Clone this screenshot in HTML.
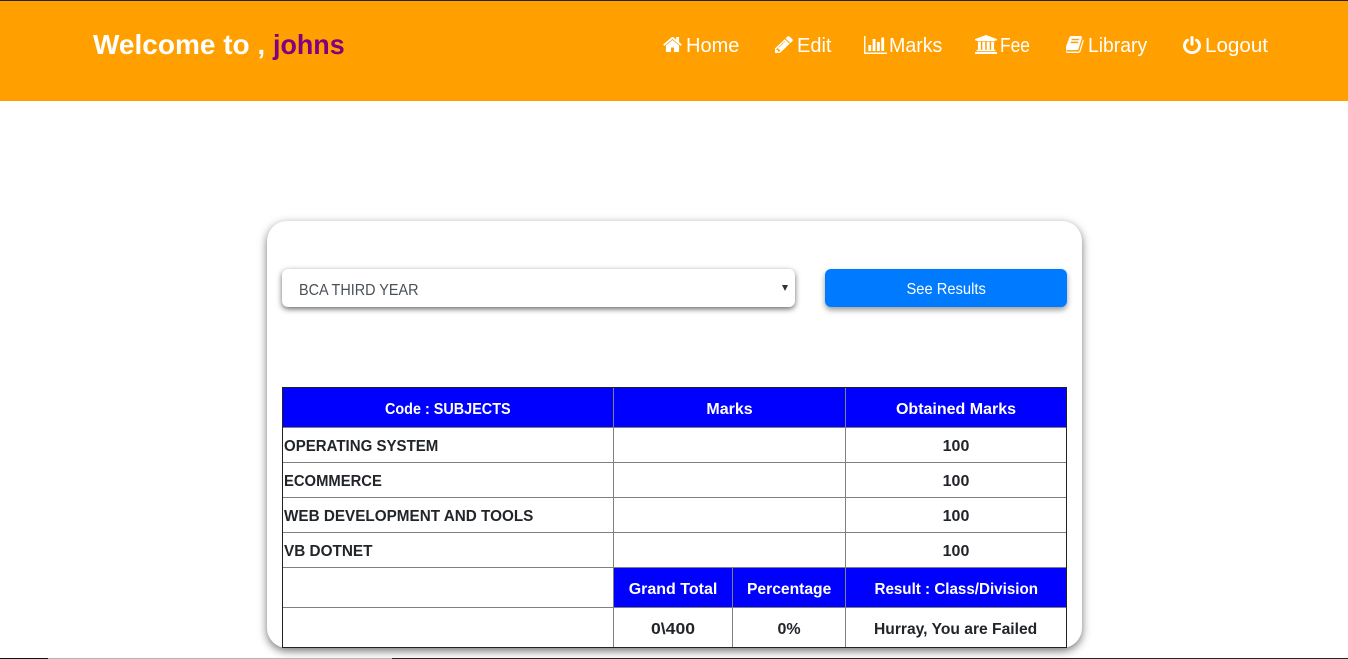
<!DOCTYPE html>
<html lang="en">
<head>
<meta charset="utf-8">
<title>Student Results</title>
<style>
html,body{margin:0;padding:0;width:1348px;height:659px;overflow:hidden;background:#fff;font-family:"Liberation Sans",sans-serif;color:#212529}
*{box-sizing:border-box}
.hdr{position:absolute;left:0;top:0;width:1348px;height:101px;background:#ff9f00;border-top:1px solid #2a2418}
.brand{position:absolute;left:93px;top:28px;font-size:28px;line-height:34px;font-weight:700;color:#fff;white-space:nowrap}
.brand span{color:#800080;display:inline-block;transform:scaleX(.96);transform-origin:0 50%}
.nav{position:absolute;top:35px;font-size:20px;line-height:23px;color:#fff;white-space:nowrap;transform-origin:0 50%}
.ic{position:absolute;fill:#fff}
.card{position:absolute;left:267px;top:221px;width:815px;height:427px;background:#fff;border-radius:20px;box-shadow:0 3px 9px rgba(0,0,0,.55)}
.sel{position:absolute;left:282px;top:269px;width:513px;height:38px;background:#fff;border-radius:6px;box-shadow:0 2px 6px rgba(0,0,0,.6);font-size:16px;line-height:44px;padding-left:17px;color:#495057}
.sel span{display:inline-block;line-height:20px;transform:scaleX(.9);transform-origin:0 50%}
.arr{position:absolute;left:782px;top:285px;width:0;height:0;border-left:3.500px solid transparent;border-right:3.500px solid transparent;border-top:6px solid #333}
.btn{position:absolute;left:825px;top:269px;width:242px;height:38px;background:#007bff;border:0;border-radius:6px;box-shadow:0 3px 6px rgba(0,0,0,.4);color:#fff;font:16px/38px "Liberation Sans",sans-serif;text-align:center;padding:2px 0 0}
.btn span{display:inline-block;transform:scaleX(.92)}
table{position:absolute;left:282px;top:387px;width:784px;height:260px;border-collapse:collapse;table-layout:fixed;font-size:16px;font-weight:700;color:#212529}
td,th{border:1px solid #808080;padding:4px 1px 0;text-align:center;vertical-align:middle;overflow:hidden;white-space:nowrap}
th{background:#0000ff;color:#fff;font-weight:700}
td.l{text-align:left}
td span,th span{display:inline-block}
td.l span{transform-origin:0 50%}
.frame{position:absolute;left:282px;top:387px;width:785px;height:261px;border:1px solid #222;pointer-events:none}
.foot{position:absolute;left:0;top:658px;height:1px}
</style>
</head>
<body>
<div class="hdr"></div>
<div class="brand">Welcome to , <span>johns</span></div>

<svg class="ic" style="left:663px;top:37px" width="19" height="15" viewBox="64 256 1664 1280" preserveAspectRatio="none"><path d="M1472 992v480q0 26-19 45t-45 19h-384v-384h-256v384h-384q-26 0-45-19t-19-45v-480q0-1 .5-3t.5-3l575-474 575 474q1 2 1 6zm223-69l-62 74q-8 9-21 11h-3q-13 0-21-7l-692-577-692 577q-12 8-24 7-13-2-21-11l-62-74q-8-10-7-23.500t11-21.500l719-599q32-26 76-26t76 26l244 204v-195q0-14 9-23t23-9h192q14 0 23 9t9 23v408l219 182q10 8 11 21.500t-7 23.500z"/></svg>
<div class="nav" style="left:686px">Home</div>

<svg class="ic" style="left:775px;top:36px" width="18" height="17" viewBox="128 128 1536 1536" preserveAspectRatio="none"><path d="M491 1536l91-91-235-235-91 91v107h128v128h107zm523-928q0-22-22-22-10 0-17 7l-542 542q-7 7-7 17 0 22 22 22 10 0 17-7l542-542q7-7 7-17zm-54-192l416 416-832 832h-416v-416zm683 96q0 53-37 90l-166 166-416-416 166-165q36-38 90-38 53 0 91 38l235 234q37 39 37 91z"/></svg>
<div class="nav" style="left:797px">Edit</div>

<svg class="ic" style="left:864px;top:36px" width="23" height="18" viewBox="0 128 2048 1536" preserveAspectRatio="none"><path d="M640 896v512h-256v-512h256zm384-512v1024h-256v-1024h256zm1024 1152v128h-2048v-1536h128v1408h1920zm-640-896v768h-256v-768h256zm384-384v1152h-256v-1152h256z"/></svg>
<div class="nav" style="left:889px;transform:scaleX(.98)">Marks</div>

<svg class="ic" style="left:975px;top:35px" width="22" height="19" viewBox="0 0 1920 1792" preserveAspectRatio="none"><path d="M960 0l960 384v128h-128q0 26-20.500 45t-48.500 19h-1526q-28 0-48.500-19t-20.500-45h-128v-128zm-704 640h256v768h128v-768h256v768h128v-768h256v768h128v-768h256v768h59q28 0 48.500 19t20.500 45v64h-1664v-64q0-26 20.500-45t48.500-19h59v-768zm1595 960q28 0 48.500 19t20.500 45v128h-1920v-128q0-26 20.500-45t48.500-19h1782z"/></svg>
<div class="nav" style="left:1000px;transform:scaleX(.87)">Fee</div>

<svg class="ic" style="left:1066px;top:36px" width="18" height="17" viewBox="90 128 1600 1536" preserveAspectRatio="none"><path d="M1639 478q40 57 18 129l-275 906q-19 64-76.500 107.500t-122.500 43.500h-923q-77 0-148.500-53.500t-99.500-131.500q-24-67-2-127 0-4 3-27t4-37q1-8-3-21.500t-3-19.500q2-11 8-21t16.500-23.500 16.500-23.500q23-38 45-91.500t30-91.500q3-10 .5-30t-.5-28q3-11 17-28t17-23q21-36 42-92t25-90q1-9-2.500-32t.5-28q4-13 22-30.500t22-22.500q19-26 42.500-84.500t27.500-96.500q1-8-3-25.500t-2-26.500q2-8 9-18t18-23 17-21q8-12 16.500-30.500t15-35 16-36 19.500-32 26.500-23.500 36-11.500 47.500 5.500l-1 3q38-9 51-9h761q74 0 114 56t18 130l-274 906q-36 119-71.500 153.500t-128.500 34.500h-869q-27 0-38 15-11 16-1 43 24 70 144 70h923q29 0 56-15.500t35-41.500l300-987q7-22 5-57 38 15 59 43zm-1064 2q-4 13 2 22.500t20 9.500h608q13 0 25.500-9.500t16.500-22.500l21-64q4-13-2-22.500t-20-9.500h-608q-13 0-25.500 9.500t-16.500 22.500zm-83 256q-4 13 2 22.500t20 9.500h608q13 0 25.500-9.500t16.500-22.500l21-64q4-13-2-22.500t-20-9.500h-608q-13 0-25.500 9.500t-16.500 22.500z"/></svg>
<div class="nav" style="left:1088px;transform:scaleX(.967)">Library</div>

<svg class="ic" style="left:1183px;top:36px" width="18" height="18" viewBox="0 0 1536 1664" preserveAspectRatio="none"><path d="M1536 896q0 156-61 298t-164 245-245 164-298 61-298-61-245-164-164-245-61-298q0-182 80.500-343t226.500-270q43-32 95.500-25t83.500 50q32 42 24.500 94.500t-49.500 84.500q-98 74-151.500 181t-53.500 228q0 104 40.500 198.500t109.500 163.500 163.500 109.500 198.500 40.500 198.500-40.500 163.500-109.500 109.500-163.500 40.500-198.500q0-121-53.500-228t-151.500-181q-42-32-49.500-84.500t24.500-94.500q31-43 84-50t95 25q146 109 226.500 270t80.500 343zm-640-768v640q0 52-38 90t-90 38-90-38-38-90v-640q0-52 38-90t90-38 90 38 38 90z"/></svg>
<div class="nav" style="left:1205px;transform:scaleX(1.03)">Logout</div>

<div class="card"></div>
<div class="sel"><span>BCA THIRD YEAR</span></div>
<div class="arr"></div>
<button class="btn"><span>See Results</span></button>

<table>
<colgroup><col style="width:331px"><col style="width:119px"><col style="width:113px"><col style="width:221px"></colgroup>
<tr style="height:40px"><th><span style="transform:scaleX(.9)">Code : SUBJECTS</span></th><th colspan="2">Marks</th><th>Obtained Marks</th></tr>
<tr style="height:35px"><td class="l"><span style="transform:scaleX(.94)">OPERATING SYSTEM</span></td><td colspan="2"></td><td>100</td></tr>
<tr style="height:35px"><td class="l"><span style="transform:scaleX(.925)">ECOMMERCE</span></td><td colspan="2"></td><td>100</td></tr>
<tr style="height:35px"><td class="l"><span style="transform:scaleX(.954)">WEB DEVELOPMENT AND TOOLS</span></td><td colspan="2"></td><td>100</td></tr>
<tr style="height:35px"><td class="l"><span style="transform:scaleX(.957)">VB DOTNET</span></td><td colspan="2"></td><td>100</td></tr>
<tr style="height:40px"><td></td><th>Grand Total</th><th><span style="transform:scaleX(.977)">Percentage</span></th><th><span style="transform:scaleX(.948)">Result : Class/Division</span></th></tr>
<tr style="height:40px"><td></td><td><span style="transform:scaleX(1.1)">0\400</span></td><td>0%</td><td><span style="transform:scaleX(.976)">Hurray, You are Failed</span></td></tr>
</table>
<div class="frame"></div>

<div class="foot" style="left:0;width:48px;background:#111"></div>
<div class="foot" style="left:48px;width:344px;background:#b5b5b5"></div>
<div class="foot" style="left:392px;width:956px;background:#2a2420"></div>
</body>
</html>
